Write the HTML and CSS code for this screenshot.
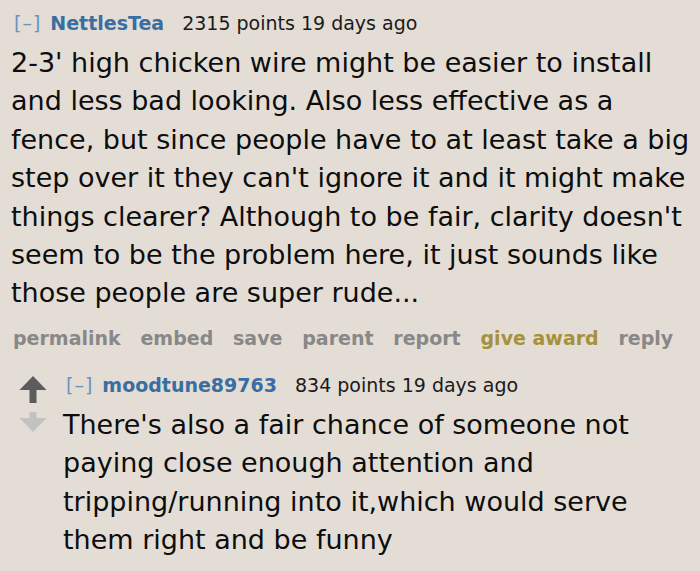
FILE: index.html
```html
<!DOCTYPE html>
<html lang="en">
<head>
<meta charset="utf-8">
<title>Comment</title>
<link rel="stylesheet" href="styles.css">
</head>
<body>
<div class="thread">
  <div class="comment">
    <p class="tagline"><span class="expand">[–]</span><span class="author">NettlesTea</span><span class="score">2315 points 19 days ago</span></p>
    <div class="md">2-3' high chicken wire might be easier to install and less bad looking. Also less effective as a fence, but since people have to at least take a big step over it they can't ignore it and it might make things clearer? Although to be fair, clarity doesn't seem to be the problem here, it just sounds like those people are super rude...</div>
    <ul class="buttons">
      <li>permalink</li>
      <li>embed</li>
      <li>save</li>
      <li>parent</li>
      <li>report</li>
      <li class="award">give award</li>
      <li>reply</li>
    </ul>
    <div class="child">
      <div class="votes">
        <svg class="arrow" width="28" height="27" viewBox="0 0 28 27"><path d="M14 0 L27.5 14 L17.5 14 L17.5 27 L10.5 27 L10.5 14 L0.5 14 Z" fill="#5c5c5c"/></svg>
        <svg class="arrow down" width="28" height="20" viewBox="0 0 28 20"><path d="M10.5 0 L17.5 0 L17.5 6 L27.5 6 L14 20 L0.5 6 L10.5 6 Z" fill="#c2c2c2"/></svg>
      </div>
      <div class="entry">
        <p class="tagline"><span class="expand">[–]</span><span class="author">moodtune89763</span><span class="score">834 points 19 days ago</span></p>
        <div class="md">There's also a fair chance of someone not paying close enough attention and tripping/running into it,which would serve them right and be funny</div>
      </div>
    </div>
  </div>
</div>
</body>
</html>
```

FILE: styles.css
```css
html, body {
  margin: 0;
  padding: 0;
  background: #e3ddd6;
}

body {
  font-family: "DejaVu Sans", Verdana, sans-serif;
  color: #0d0d0d;
}

.thread {
  padding: 11px 8px 0 11px;
}

.tagline {
  margin: 0 0 0 3px;
  font-size: 19px;
  line-height: 24px;
  color: #1a1a1a;
  display: flex;
  white-space: nowrap;
}

.expand {
  color: #6b93c0;
  letter-spacing: 1px;
  margin-right: 9px;
}

.author {
  color: #3a6da2;
  font-weight: bold;
  margin-right: 18px;
}

.md {
  margin-top: 9px;
  font-size: 27px;
  line-height: 38.4px;
  color: #0d0d0d;
}

.buttons {
  list-style: none;
  margin: 13px 0 0 2px;
  padding: 0;
  display: flex;
  gap: 19.8px;
  font-size: 19px;
  line-height: 24px;
  font-weight: bold;
  color: #888;
  white-space: nowrap;
}

.buttons .award {
  color: #a6913b;
}

.child {
  margin-top: 23px;
  display: flex;
}

.votes {
  width: 52px;
  padding: 3px 8px 0 0;
  display: flex;
  flex-direction: column;
  align-items: center;
  box-sizing: border-box;
}

.arrow {
  display: block;
}

.arrow.down {
  margin-top: 9px;
}

.entry {
  flex: 1;
}
```
